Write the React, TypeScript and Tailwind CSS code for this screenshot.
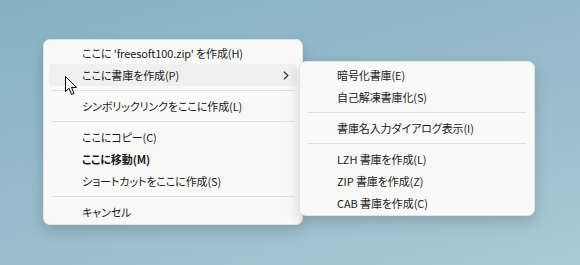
import React from "react";

type MenuEntry =
  | { kind: "item"; label: string; bold?: boolean; active?: boolean; submenu?: boolean }
  | { kind: "sep" };

const mainMenu: MenuEntry[] = [
  { kind: "item", label: "ここに 'freesoft100.zip' を作成(H)" },
  { kind: "item", label: "ここに書庫を作成(P)", active: true, submenu: true },
  { kind: "sep" },
  { kind: "item", label: "シンボリックリンクをここに作成(L)" },
  { kind: "sep" },
  { kind: "item", label: "ここにコピー(C)" },
  { kind: "item", label: "ここに移動(M)", bold: true },
  { kind: "item", label: "ショートカットをここに作成(S)" },
  { kind: "sep" },
  { kind: "item", label: "キャンセル" },
];

const subMenu: MenuEntry[] = [
  { kind: "item", label: "暗号化書庫(E)" },
  { kind: "item", label: "自己解凍書庫化(S)" },
  { kind: "sep" },
  { kind: "item", label: "書庫名入力ダイアログ表示(I)" },
  { kind: "sep" },
  { kind: "item", label: "LZH 書庫を作成(L)" },
  { kind: "item", label: "ZIP 書庫を作成(Z)" },
  { kind: "item", label: "CAB 書庫を作成(C)" },
];

const menuPanelClass =
  "rounded-[7px] border border-[#e3e3e3] bg-[#f9f9f9] pt-[2px] pb-[1px] shadow-[0_6px_14px_rgba(0,0,0,0.16)]";

function Chevron() {
  return (
    <svg width="6" height="9" viewBox="0 0 6 9" className="ml-auto mr-[8px] shrink-0" aria-hidden>
      <path d="M1 0.8 L4.8 4.5 L1 8.2" fill="none" stroke="#333" strokeWidth="1.2" />
    </svg>
  );
}

function MenuList({ entries, textPad }: { entries: MenuEntry[]; textPad: string }) {
  return (
    <ul className="flex flex-col">
      {entries.map((entry, i) =>
        entry.kind === "sep" ? (
          <li key={i} className="mx-[8px] my-[4px] h-px bg-[#e0e0e0]" />
        ) : (
          <li
            key={i}
            className={`mx-[5px] flex h-[22px] items-center rounded-[4px] ${textPad} ${
              entry.active ? "bg-[#f0f0f0]" : ""
            } ${entry.bold ? "font-semibold" : "font-normal"}`}
          >
            <span className="whitespace-nowrap leading-none">{entry.label}</span>
            {entry.submenu && <Chevron />}
          </li>
        ),
      )}
    </ul>
  );
}

function Cursor() {
  return (
    <svg
      width="13"
      height="20"
      viewBox="0 0 13 20"
      className="pointer-events-none absolute left-[22px] top-[37px]"
      aria-hidden
    >
      <path
        d="M0.5 0.5 L0.5 15.5 L4 12.2 L6.6 18.4 L9 17.4 L6.5 11.4 L11.5 11.4 Z"
        fill="#fff"
        stroke="#000"
        strokeWidth="1"
        strokeLinejoin="round"
      />
    </svg>
  );
}

export default function App() {
  return (
    <div
      className="h-[265px] w-[580px] overflow-hidden bg-[linear-gradient(165deg,#86b2c4_0%,#98bccb_55%,#a8cad6_100%)] pl-[43px] pt-[39px] text-[11px] tracking-[-0.1px] text-[#1b1b1b] [font-family:'Noto_Sans_CJK_JP','Noto_Sans',sans-serif] [font-feature-settings:'palt']"
    >
      <div className="relative w-[260px]">
        <div className={menuPanelClass}>
          <MenuList entries={mainMenu} textPad="pl-[33px]" />
        </div>
        <Cursor />
        <div className={`absolute left-[256px] top-[22px] w-[236px] ${menuPanelClass}`}>
          <MenuList entries={subMenu} textPad="pl-[32px]" />
        </div>
      </div>
    </div>
  );
}
